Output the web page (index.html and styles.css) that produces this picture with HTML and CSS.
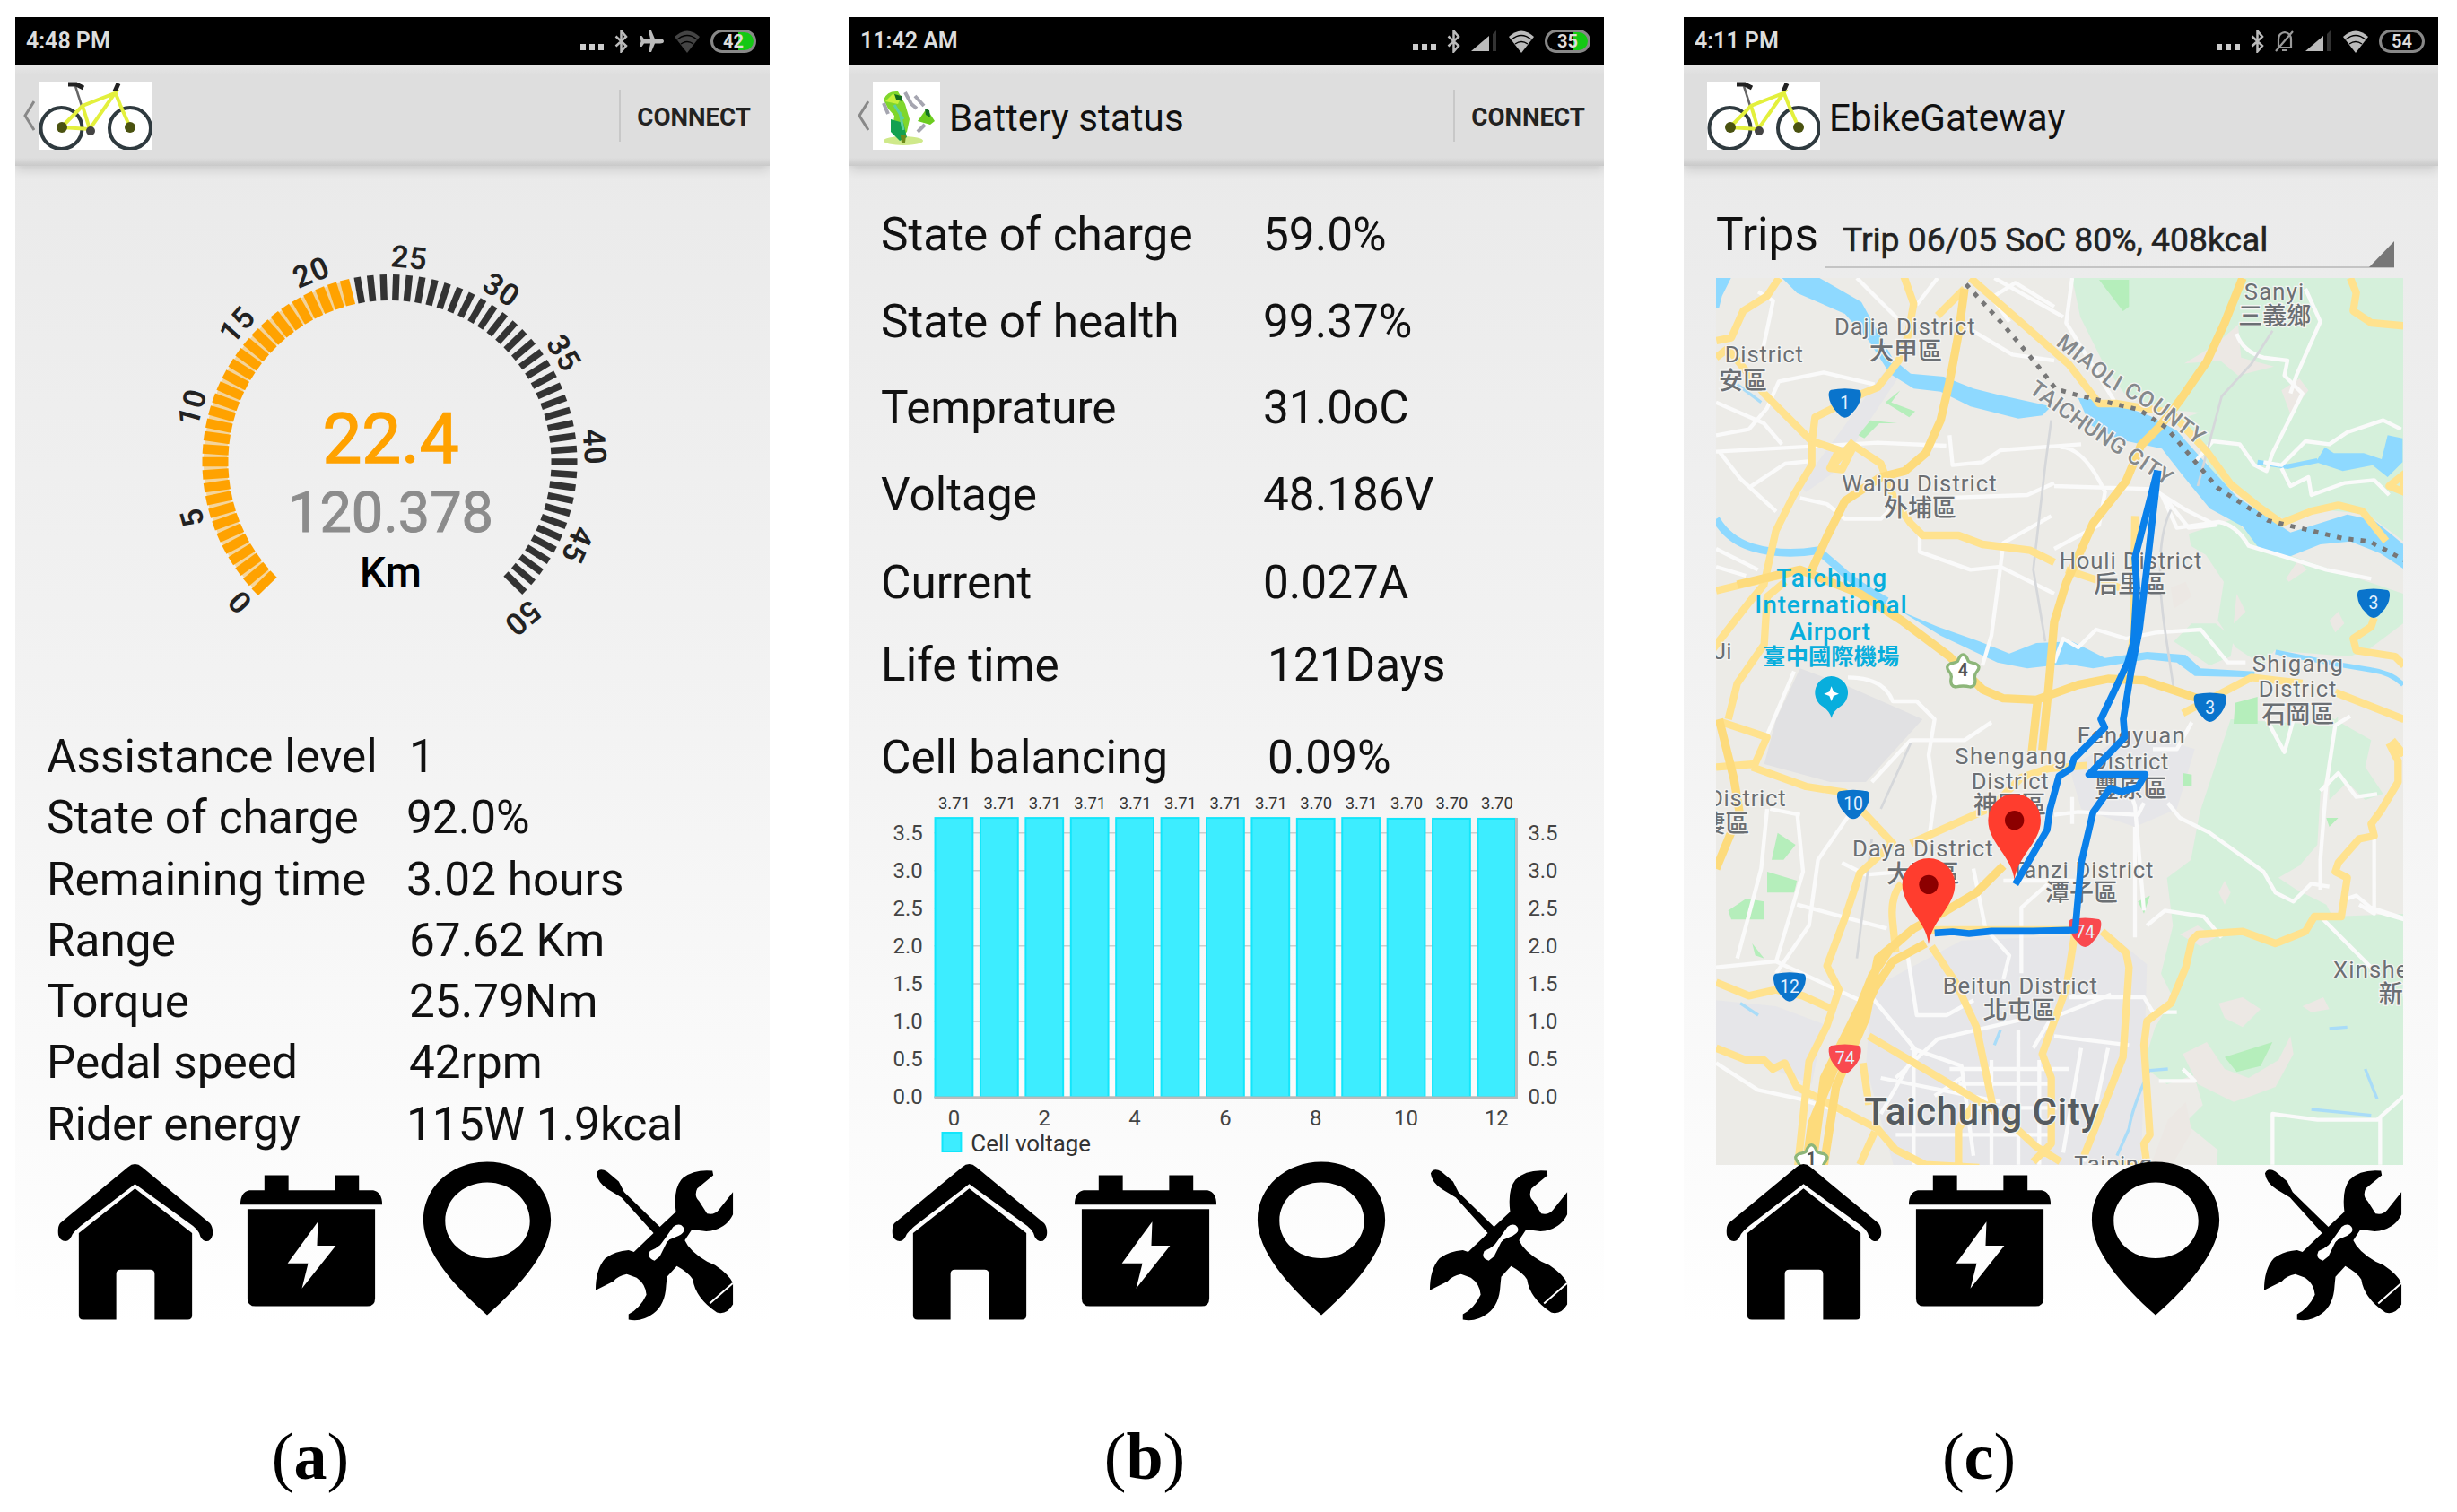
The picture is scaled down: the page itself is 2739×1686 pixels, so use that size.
FILE: index.html
```html
<!DOCTYPE html>
<html lang="en">
<head>
    <meta charset="UTF-8">
    <meta name="viewport" content="width=device-width, initial-scale=1.0">
    <title>EbikeGateway screens</title>
    <link rel="stylesheet" href="styles.css">
</head>
<body>
    <!-- Shared icons -->
    <svg class="sprite" aria-hidden="true">
        <symbol id="dots" viewBox="0 0 26 26"><path d="M0 18h6v7H0zM10 18h6v7h-6zM20 18h6v7h-6z" fill="#ccc"/></symbol>
        <symbol id="bluetooth" viewBox="0 0 15 26"><path d="M1.500 7.500 13 18l-5.500 6.500v-23L13 8 1.500 18.500" fill="none" stroke="#bbb" stroke-width="2.500"/></symbol>
        <symbol id="plane" viewBox="0 0 28 26"><path d="M28 13c0-1.800-2-2.500-4-2.500h-6L14 1h-3l2 9.500H6L3.500 7H1l1.500 6L1 19h2.500L6 15.500h7L11 25h3l4-9.500h6c2 0 4-.7 4-2.500z" fill="#bbb"/></symbol>
        <symbol id="signal" viewBox="0 0 30 26"><path d="M0 24 20 7v17z" fill="#bbb"/><path d="M24 24V5l4-4v23z" fill="#333"/></symbol>
        <symbol id="bell" viewBox="0 0 22 26"><path d="M4 20V11q0-7 7-8 7 1 7 8v9zM8 23h6M1 24 20 2" fill="none" stroke="#999" stroke-width="2.200"/></symbol>
        <symbol id="wifi" viewBox="0 0 28 26">
            <path d="M0 8Q14-5 28 8L14 26z" fill="currentColor"/>
            <path d="M3 11q11-9 22 0M7 16q7-5 14 0" fill="none" stroke="#000" stroke-width="1.500"/>
        </symbol>
        <symbol id="bike" viewBox="0 0 126 76">
            <g fill="none" stroke="#2f3a3f" stroke-width="4">
                <circle cx="25.500" cy="52" r="23"/>
                <circle cx="102" cy="52" r="23"/>
                <path d="M48 27 41 5" stroke="#666" stroke-width="2.500"/>
                <path d="M33 3h9l8 4M85 11l4-9" stroke="#222" stroke-width="5"/>
            </g>
            <path d="M25.500 51 49 27 85 13 57 53zM49 27l8 26M85 11l6 15 11 25" fill="none" stroke="#e3f03c" stroke-width="4"/>
            <circle cx="26" cy="51" r="6" fill="#4a5210"/>
            <circle cx="102" cy="51" r="6" fill="#4a5210"/>
            <circle cx="58" cy="55" r="5" fill="#444"/>
        </symbol>
        <symbol id="home" viewBox="0 0 175 178">
            <path d="M3 69 79 6q8-7 16 0l76 63q4 5 3 13-2 8-8 7-5-1-7-9-2-4-7-8L87 25 26 72q-6 5-9 9-3 8-8 8-6 0-8-7-1-9 2-13z"/>
            <path d="M24 80 87 30l64 50v92q0 5-5 5h-37v-51q0-5-5-5H71q-5 0-5 5v51H29q-5 0-5-5z"/>
        </symbol>
        <symbol id="battery" viewBox="0 0 175 178">
            <path d="M34 15h27v17h52V15h27v17h16q10 2 10 16H7q0-14 10-16h17z"/>
            <path fill-rule="evenodd" d="M15 53h143v100q0 9-9 9H24q-9 0-9-9zM94 67 60 114h23l-7 28 38-48H93z"/>
        </symbol>
        <symbol id="pin" viewBox="0 0 175 178">
            <path fill-rule="evenodd" d="M85.500 0C125 0 157 28 157 65c0 34-32 72-71.500 107C46 137 14 99 14 65 14 28 46 0 85.500 0zm0 23c-26 0-47 19-47 43s21 42 47 42 48-18 48-42-22-43-48-43z"/>
        </symbol>
        <symbol id="tools" viewBox="0 0 175 178">
            <path d="M10 13q3-7 12-2l13 11 6 12 40 39 18-17q-3-25 6-36 12-12 35-10l1 5-18 15q-4 8 2 14l9 14q8 2 13-4l16-20v25q-8 17-30 19l-16-2-8 12q5 12 25 24l9 4q15 10 20 20v24q-7 12-18 9-24-16-27-37-5-8-18-15l-11 12-1 10q-1 21-14 31-13 10-28 7v-6q13-7 20-22-1-12-11-19l-11-4q-10 2-15 8L9 144q0-24 11-36 11-8 26-9l6 2 22-21-36-40-15-9Q11 23 10 13z"/>
            <path d="M96 73q7-5 11 0t-5 10L90 88l-9 18-6 5q-9-3-5-11 7-3 11-6l8-11z" fill="#fff"/>
            <path d="M137 159l26-23M91 87 77 98" stroke="#fff" stroke-width="2"/>
        </symbol>
        <symbol id="shield" viewBox="-54 -50 108 100" overflow="visible">
            <path d="M-46-44q46-9 92 0 9 2 8 20-2 30-28 56-26 34-52 0-26-26-28-56-1-18 8-20z"/>
        </symbol>
        <symbol id="marker" viewBox="-90 -90 180 300" overflow="visible">
            <path d="M0 200C-8 120-88 75-88 0a88 88 0 0 1 176 0C88 75 8 120 0 200z" fill="#ff3d2e"/>
            <circle r="32" fill="#8c0000"/>
        </symbol>
    </svg>

    <main class="figure">
        <!-- (a) Dashboard -->
        <section class="panel">
            <div class="screen">
                <div class="status-bar">
                    <span class="time">4:48 PM</span>
                    <svg class="st-dots"><use href="#dots"/></svg>
                    <svg class="st-bt"><use href="#bluetooth"/></svg>
                    <svg class="st-plane"><use href="#plane"/></svg>
                    <svg class="st-wifi dim"><use href="#wifi"/></svg>
                    <span class="level charging">42</span>
                </div>
                <header class="app-bar">
                    <svg class="back" viewBox="0 0 13 34"><path d="M12 1 2 17l10 16"/></svg>
                    <svg class="logo-bike"><use href="#bike"/></svg>
                    <button class="connect">CONNECT</button>
                </header>
                <svg class="gauge" viewBox="-417.5 -330 841 624">
                    <g id="ticks"></g>
                    <g id="tick-labels"></g>
                    <text class="speed" x="1" y="1">22.4</text>
                    <text class="distance" x="1" y="78">120.378</text>
                    <text class="unit" x="1" y="139">Km</text>
                </svg>
                <dl class="readings ride">
                    <dt>Assistance level</dt><dd class="nudge">1</dd>
                    <dt>State of charge</dt><dd>92.0%</dd>
                    <dt>Remaining time</dt><dd>3.02 hours</dd>
                    <dt>Range</dt><dd class="nudge">67.62 Km</dd>
                    <dt>Torque</dt><dd class="nudge">25.79Nm</dd>
                    <dt>Pedal speed</dt><dd class="nudge">42rpm</dd>
                    <dt>Rider energy</dt><dd>115W 1.9kcal</dd>
                </dl>
                <nav class="tabs">
                    <svg><use href="#home"/></svg>
                    <svg><use href="#battery"/></svg>
                    <svg><use href="#pin"/></svg>
                    <svg><use href="#tools"/></svg>
                </nav>
            </div>
            <p class="caption">(<b>a</b>)</p>
        </section>

        <!-- (b) Battery status -->
        <section class="panel">
            <div class="screen">
                <div class="status-bar">
                    <span class="time">11:42 AM</span>
                    <svg class="st-dots"><use href="#dots"/></svg>
                    <svg class="st-bt"><use href="#bluetooth"/></svg>
                    <svg class="st-signal"><use href="#signal"/></svg>
                    <svg class="st-wifi"><use href="#wifi"/></svg>
                    <span class="level charging">35</span>
                </div>
                <header class="app-bar">
                    <svg class="back" viewBox="0 0 13 34"><path d="M12 1 2 17l10 16"/></svg>
                    <svg class="logo-battery" viewBox="0 0 75 76">
                        <ellipse cx="34" cy="66" rx="22" ry="5" fill="#cfe98a"/>
                        <path d="M12 20q4-10 16-9l8 14 5 17-3 14-8 8-8-12 2-14-7-8z" fill="#7fd62c"/>
                        <path d="M20 42l14 4 4 16-8 4-10-10z" fill="#12a050"/>
                        <path d="M14 22l8-8 10 2-4 9z" fill="#c6f03c"/>
                        <path d="M24 14l8 2 1 6-7-2z" fill="#136b1e"/>
                        <path d="M24 26l10 16M30 34l4 20" stroke="#5cd0a0" stroke-width="3"/>
                        <path d="M12 24l5 12M36 12l7 13 6 5M47 16l10 11M50 56l8-8" fill="none" stroke="#a5a5b0" stroke-width="4"/>
                        <path d="M50 44l10-14 9 14-5 4z" fill="#6ccc1f"/>
                        <path d="M58 30l5 2 1 8-5-3z" fill="#137026"/>
                        <path d="M31 60h6l-1 8h-4z" fill="#6e8b1a"/>
                    </svg>
                    <h1>Battery status</h1>
                    <button class="connect">CONNECT</button>
                </header>
                <dl class="readings pack">
                    <dt>State of charge</dt><dd>59.0%</dd>
                    <dt>State of health</dt><dd>99.37%</dd>
                    <dt>Temprature</dt><dd>31.0oC</dd>
                    <dt>Voltage</dt><dd>48.186V</dd>
                    <dt>Current</dt><dd>0.027A</dd>
                    <dt>Life time</dt><dd class="nudge">121Days</dd>
                    <dt>Cell balancing</dt><dd class="nudge">0.09%</dd>
                </dl>
                <svg class="chart" id="chart" viewBox="0 0 845 405" preserveAspectRatio="none"></svg>
                <nav class="tabs">
                    <svg><use href="#home"/></svg>
                    <svg><use href="#battery"/></svg>
                    <svg><use href="#pin"/></svg>
                    <svg><use href="#tools"/></svg>
                </nav>
            </div>
            <p class="caption">(<b>b</b>)</p>
        </section>

        <!-- (c) Trips -->
        <section class="panel">
            <div class="screen">
                <div class="status-bar">
                    <span class="time">4:11 PM</span>
                    <svg class="st-dots"><use href="#dots"/></svg>
                    <svg class="st-bt"><use href="#bluetooth"/></svg>
                    <svg class="st-bell"><use href="#bell"/></svg>
                    <svg class="st-signal"><use href="#signal"/></svg>
                    <svg class="st-wifi"><use href="#wifi"/></svg>
                    <span class="level">54</span>
                </div>
                <header class="app-bar no-back">
                    <svg class="logo-bike"><use href="#bike"/></svg>
                    <h1>EbikeGateway</h1>
                </header>
                <div class="trip-picker">
                    <span class="trip-label">Trips</span>
                    <div class="spinner">Trip 06/05 SoC 80%, 408kcal</div>
                </div>
                <svg class="map" viewBox="39 24 2298 2967" preserveAspectRatio="none">
                    <rect x="39" y="24" width="2298" height="2967" fill="#ecebe7"/>
                    <!-- built-up land -->
                    <g fill="#e6e6e9">
                        <path d="M39 2440l200 20 160 60-40 200-320-120zM560 2400l300-160 500-20 120 100-20 700H640L540 2660z"/>
                        <path d="M1220 1660l220-120 200 60-60 200-140 60-180-60zM600 340l60 0-220 330-100 70-20-20z"/>
                        <path d="M320 1330 480 1390 730 1500 540 1710 420 1710 200 1650 240 1500z" fill="#e1e1e3"/>
                    </g>
                    <!-- hills -->
                    <g fill="#d5f0db">
                        <path d="M1230 24h1107v880l-120-90-200-20-50 50-130-60-130-90-60-120-50-80 60-20-110-10-140-50-70-100-80-160z"/>
                        <path d="M1620 880l150-50 90 90 120 40 180 60 177 60v100l-120 90-60 20-250-20-40 50-90-60-60-90 20-130-60-90-50-30z"/>
                        <path d="M1570 1240l60-60 80 0 60 50-10 60-70 30z"/>
                        <path d="M1760 1500l330 20 30-30-20 140-40 120-10 170-60 70-70 40 60 40 100 50 20 40 260-10 77 90v1251h-820l60-40 100-230-80-10 20-270-110-90 60-60-30-100-90 30-80-60 40-130 60-100-40-80 40-160-20-160 80-60 30-160z"/>
                        <path d="M2090 1490l140 80-20 90 60 90-60 20-60-60-60 60z"/>
                    </g>
                    <g fill="#ece8e4">
                        <path d="M1705 250l80-70 10 110 110 30-120 30-60-50-120 10zM1930 400l60-40 30 40-60 80zM1560 1060l50-20 20 50-60 40zM1780 1080l30 60-40 40zM1945 1030l40-60 30 30-60 40zM2090 1170l30-30 20 40-30 30z"/>
                        <path d="M1720 2450l80-20 60 40-60 60-60-30zM1600 2620l80-40 60 90 80 30 100-60 40-80 10 60-60 110-80 30-60 20-120-60zM1740 2040l20 40-20 40-20-40zM2000 2460l70-30 20 40-60 10zM1590 2220l60-30 60 40-50 30zM1550 2840l60-60 20 100-60 100-80 20z"/>
                    </g>
                    <g fill="#b5eebb">
                        <path d="M1320 30h100v90l-20 15zM1740 2630l160-50-40 80-80 20zM1600 1680l30 5v40h-30zM245 1880l60 40-40 50-40 0zM210 2010l100 30-10 40-90 0zM80 2140l60-40 60 10v60l-110 0zM160 2250l40 50-30-10zM515 550l40-50 90 10-60 0-50 50zM605 440l50-40-30 40 80 30-20 20zM2080 1830l40 0-30 30zM1450 2110l40-20-20 60z"/>
                        <path d="M1775 1445l75-20v90h-80z"/>
                    </g>
                    <!-- water -->
                    <g fill="#8ed9ff">
                        <path d="M260 24h125l140 80 55 100 50 90 60 50 110 10 100 40 80 20 180 40-30 30-80 10-160-40-100-50-90-10-80-50-70-110-80-90-160-70z"/>
                        <path d="M39 24h50l-30 60-10 40H39zM1250 425l100 10 140 50 90 50 80 90 120 130 180 120 190-60 90 20 110 90v80l-90-60-100-40-100 10-100 40-100-20-60-80-110-60-90-110-70-90-140-30-100-50z"/>
                        <path d="M2045 640l30-50 30 20 100 0 60 20 20-80 50 10v80l-50 50-50-40-100 20z"/>
                        <path d="M660 1140l120 50 140 50 100 40 90-35 120-5 110 55 140-20 130 10 50 45 180 10v20l-200-5-60-45-100-10-180 30-90-15-130 15-100-20-190-90z"/>
                    </g>
                    <path d="M39 830Q80 900 160 925q100 30 220 10l70 60q50 50 160 110" fill="none" stroke="#8ed9ff" stroke-width="26"/>
                    <path d="M1910 1275l200 40 120 20q70 10 107 50M1850 640l100 15 100-20" fill="none" stroke="#8ed9ff" stroke-width="16"/>
                    <path d="M1490 2675l60-5M1490 2670q-60 130-70 200l-40 90M2210 2670l40 100M2030 2805l200 20M2090 2535l60-5M120 2450l60 40M970 2590l20-50M110 380l80 60" fill="none" stroke="#a9dcf8" stroke-width="10"/>
                    <!-- minor roads -->
                    <g class="road-minor">
                        <path d="M180 70l50 30-40 190M39 440l160 70 60 70M39 550l110-20 60-70 40-90 150-30 170 40M39 605l540-30 230 10M50 605l70 90 120 110M150 725l120-80 100-10 M320 760l90 20 60 50 120 0 60-60"/>
                        <path d="M510 24l150 150M780 24l-70 90M880 190l150 90 140 20M940 60l80 110M1170 120 1040 40 960 90M970 24l230 130"/>
                        <path d="M820 550l10 100 100-10 60-40 270-20M780 760l300-10 90-40M1190 590q80 0 150 150l-20 110-150 80M1170 720l330 10 110 70 100 50-90 10-80-100"/>
                        <path d="M720 870v70l170 60 100-10 180 90M990 990l10-80 160-90M990 990l-30 230-30 100M1170 1310l30-80 50 30 60-60 100 30 100-20 150-10 90 110 60 0"/>
                        <path d="M1230 24l-20 150 160 260M1780 210q20 60 90 80l80 10-10 50 60 60-30 60-70 140-20 60-40-20-50-70-90-10-60 70M2010 60l50 110-80 180-20 60M1870 640l60 10 80-80 80 10 60-40 120-40 60 30M1930 660l30 60 60-30 10 60 110-40 100-10 50 50"/>
                        <path d="M1530 750l50 110 140-20q60 10 100 80l100 30 160 50 150 30"/>
                        <path d="M39 930l140 70M39 990l100 30M300 1340l-110 260M480 1360q120 0 150 80l80 0 60 60-20 120 20 140-20 150M560 1710l130-140 180 0 90-60"/>
                        <path d="M210 1800l-20 200-80 300M310 1810l20 200-90 300M540 1740l-160 230-30 220-110 160M220 1800l100 20M310 2120l300 80M460 1980l80 40 120-10M39 2330l200-20 280 130"/>
                        <path d="M680 2290l30 200 100 0 90-50M560 2430l150 180-120 210M39 2650l140 90 140 30 160 50 M690 2600l170 60 40 300M590 2700l400 80M860 2700l-90 60 M1050 2540v450M900 2000l40 200 80 90-20 80M1060 2350V2130l90-80M1000 2040l240 0M640 2700l140-130 300-70M1100 2600l60-100 200-80"/>
                        <path d="M1220 2430l250 0 30 50 80 0M1260 2600l-60 350M1170 2560l250 30M1350 2600l-80 380M1470 2140l-30-350-20-60M1550 1780l40 50 100 50 180 130 40 70 60 30 60-60 60 10M1480 2190l60-50 130 20 60 70M2060 2070l0-100 20-250 30-200 50-30M2060 1740l60-60 60 80 70-10M2240 1900v250l-50-30M2150 2100l30-10 60 50 100 30M2230 2130l120 40M2060 2160l200 200M1900 2990v-170l150 20 200 0 90-80M2260 2830l0 160"/>
                        <path d="M1170 1820l80-10 200 10 20-40M1230 1760v90M1440 1860v370M1880 1500l60 110 30-110M1500 1600h80l50-90M1600 2670l40 40-120 0M820 2670h400M850 2720h320M900 2800h280M960 2640v350M1120 2640v350M640 2890h520M700 2600v390"/>
                    </g>
                    <path d="M1160 500l-20 150-40 350 40 240M1900 200l-70 110-100 110-80 300M1560 800q-60 120-20 400l30 200M590 1800l100-220M560 1900l-50 400" fill="none" stroke="#d5d7da" stroke-width="8"/>
                    <!-- main roads -->
                    <g class="road-main">
                        <path d="M250 24l-40 60-80 50-40 90-50 10M39 290l40-30 120 150 160 160 0 80-60 100-60 120-40 180-50 60-140 180M360 570l10-80 160-80 50-20 70-90 30-80 20-110-50-140"/>
                        <path d="M360 570l90 30-30 60 40 5 40-80 90 60 50 130 50 70 40 40 120 0 80 30 160 20 80 40M430 650l70-80"/>
                        <path d="M39 1070l250-60M80 1500l30-120 90-130 10-160 60-50M890 24l330 290 100 130 60 0 180 30 120 130 80 110 100 80 70 50 100-40 90-20 80 20 80 100M780 150l90-90M2160 24l20 50-10 60 60 40 110 10M1440 820l-5 400-20 130M1210 1000l180 60M2240 1160l-10 30-60 40 10 40 130 20 30 30M1600 1480l230-120 170 20M2110 1410l230 90"/>
                        <path d="M39 1660l130-10 40-90-150-50M160 1660l180 65 130 20 160 170-110 100-50 150-60 160 40 80-40 120-60 120-60 560M690 1915l270-120 100-100 90-30 130-10M39 2380l110 45 90-20 90 20 110 50M39 2600l100 40 60 0 30 30 40-20 40 80 270 140 60 70 100 50 180 10M520 2990l50-110M550 2560l440 260 120 110 80 50M760 2260l80 120 70 150 60 290M660 2050q-40 40-30 130l10 100M530 2650l20 140M850 2990v-120l50-80M1100 2980l60-60 0-220-30-80 80-220 30-190"/>
                        <path d="M2290 1580l30 60 0 70-60 100-30 40 10 40-50 10-70 80-10 30 40 20-20 130-90 0-30 50-100 40-110-40-150 10-20 20-20 90-50 120-80 60-10 80 20 300-20 30 10 70-110 0"/>
                        <path d="M1330 2210l80 70 10 50-20 300-130 330"/>
                        <path d="M740 2205h500"/>
                        <path d="M2300 1570l40 50M2290 720l50 20v-60z"/>
                    </g>
                    <g class="road-motorway">
                        <path d="M870 60l-20 150-30 160-30 130-50 110-70 60-80 20-120 80-60 120-60 130M1800 24l-60 150-60 130-90 130-70 90-60 60-50 120-110 140-90 200-40 130-20 230-20 200"/>
                        <path d="M110 1050l210-50 200 80 140 90 160 120 110 110 70 30 110 5 140-50 100-20 120 5 240 80"/>
                        <path d="M1115 1430l-20 180M39 2000l50-120 30-60-20-120-50-200"/>
                        <path d="M1000 1990l-90 90-100 60-110 60-80 70-60 90-40 100-60 120-60 120-40 300M740 2250l-110 60-60 90-70 150-50 80-90 220-20 140M700 2200l-120 100-40 200-100 230-40 260"/>
                    </g>
                    <path class="border-line" d="M875 45l120 130 110 130 70 90 70 20 210 50 90 60 170 200 170 110 250 60 90 10 120 65"/>
                    <!-- place names -->
                    <g class="place">
                        <text x="435" y="212" textLength="470">Dajia District</text>
                        <text class="zh" x="552" y="297">大甲區</text>
                        <text x="68" y="305" textLength="262">District</text>
                        <text class="zh" x="48" y="397">安區</text>
                        <text x="460" y="738" textLength="517">Waipu District</text>
                        <text class="zh" x="600" y="823">外埔區</text>
                        <text x="1805" y="95" textLength="200">Sanyi</text>
                        <text class="zh" x="1786" y="181">三義鄉</text>
                        <text x="1187" y="995" textLength="476">Houli District</text>
                        <text class="zh" x="1303" y="1078">后里區</text>
                        <text x="1832" y="1340" textLength="304">Shigang</text>
                        <text x="1853" y="1425" textLength="260">District</text>
                        <text class="zh" x="1864" y="1512">石岡區</text>
                        <text x="1247" y="1582" textLength="360">Fengyuan</text>
                        <text x="1297" y="1668" textLength="255">District</text>
                        <text class="zh" x="1305" y="1760">豐原區</text>
                        <text x="838" y="1650" textLength="373">Shengang</text>
                        <text x="893" y="1735" textLength="258">District</text>
                        <text class="zh" x="900" y="1815">神岡區</text>
                        <text x="495" y="1960" textLength="470">Daya District</text>
                        <text class="zh" x="610" y="2045">大雅區</text>
                        <text x="1025" y="2030" textLength="476">Tanzi District</text>
                        <text class="zh" x="1140" y="2110">潭子區</text>
                        <text x="12" y="1790" textLength="260">District</text>
                        <text class="zh" x="-92" y="1877">梧棲區</text>
                        <text x="797" y="2417" textLength="517">Beitun District</text>
                        <text class="zh" x="932" y="2502">北屯區</text>
                        <text x="2103" y="2363" textLength="250">Xinshe</text>
                        <text class="zh" x="2255" y="2447">新社區</text>
                        <text x="30" y="1300">Ji</text>
                        <text x="1237" y="3016" textLength="260">Taiping</text>
                    </g>
                    <path id="county" d="M1173 247 1345 385 1500 470 1650 585" fill="none"/>
                    <path id="city" d="M1082 405 1240 520 1400 625 1560 730" fill="none"/>
                    <text class="region"><textPath href="#county" textLength="585">MIAOLI COUNTY</textPath></text>
                    <text class="region"><textPath href="#city" textLength="560">TAICHUNG CITY</textPath></text>
                    <g class="airport">
                        <text x="425" y="1055" textLength="368">Taichung</text>
                        <text x="423" y="1145" textLength="508">International</text>
                        <text x="420" y="1235" textLength="270">Airport</text>
                        <text class="zh" x="424" y="1318">臺中國際機場</text>
                        <path d="M425 1496q-6-24-32-40a55 55 0 1 1 64 0q-26 16-32 40z"/>
                        <path d="M425 1390l7 18 18 7-18 7-7 18-7-18-18-7 18-7z" fill="#fff"/>
                    </g>
                    <text class="big-city" x="535" y="2855" textLength="785">Taichung City</text>
                    <!-- highway numbers -->
                    <g class="shields">
                        <use href="#shield" x="416" y="392" width="108" height="100" fill="#0a74cc"/><text x="470" y="462">1</text>
                        <use href="#shield" x="440" y="1735" width="116" height="100" fill="#0a74cc"/><text x="498" y="1802">10</text>
                        <use href="#shield" x="227" y="2345" width="116" height="100" fill="#0a74cc"/><text x="285" y="2414">12</text>
                        <use href="#shield" x="2184" y="1062" width="108" height="100" fill="#0a74cc"/><text x="2238" y="1132">3</text>
                        <use href="#shield" x="1637" y="1410" width="108" height="100" fill="#0a74cc"/><text x="1691" y="1482">3</text>
                        <use href="#shield" x="412" y="2586" width="116" height="100" fill="#f9494f"/><text x="470" y="2654">74</text>
                        <use href="#shield" x="1215" y="2163" width="116" height="100" fill="#f9494f"/><text x="1273" y="2232">74</text>
                        <path d="M865 1284q10 0 18 22 6 5 24 8 18 8 6 24-12 14-8 26 4 26-16 28-24-6-48 0-20-2-16-28 4-12-8-26-12-16 6-24 18-3 24-8 8-22 18-22z"/><text class="dark" x="865" y="1357">4</text>
                        <path d="M358 2924q10 0 18 22 6 5 24 8 18 8 6 24-12 14-8 26 4 26-16 28-24-6-48 0-20-2-16-28 4-12-8-26-12-16 6-24 18-3 24-8 8-22 18-22z"/><text class="dark" x="358" y="2990">1</text>
                    </g>
                    <!-- recorded route -->
                    <g class="route">
                        <path d="M1515 668l-75 292 6 100-10 180-20 70-90 190 13 28-103 104-10 33-40 25-30 110-10 70-106 182"/>
                        <path d="M1517 668l-32 282-30 250-28 140-26 160 5 60-120 125h188l-24 42-55 16-38-12-57 80-40 170-20 224-140 4H960l-75 8-55-6-60 4"/>
                    </g>
                    <use href="#marker" x="947" y="1748" width="180" height="300"/>
                    <use href="#marker" x="660" y="1963" width="180" height="300"/>
                </svg>
                <nav class="tabs">
                    <svg><use href="#home"/></svg>
                    <svg><use href="#battery"/></svg>
                    <svg><use href="#pin"/></svg>
                    <svg><use href="#tools"/></svg>
                </nav>
            </div>
            <p class="caption">(<b>c</b>)</p>
        </section>
    </main>

    <script>
        const svgNS = 'http://www.w3.org/2000/svg';

        function add(parent, tag, attrs, text) {
            const el = document.createElementNS(svgNS, tag);
            for (const key in attrs) {
                el.setAttribute(key, attrs[key]);
            }
            if (text !== undefined) {
                el.textContent = text;
            }
            parent.appendChild(el);
        }

        function arc(r, from, to) {
            const a = from * Math.PI / 180;
            const b = to * Math.PI / 180;
            return `M${r * Math.cos(a)} ${r * Math.sin(a)}A${r} ${r} 0 0 1 ${r * Math.cos(b)} ${r * Math.sin(b)}`;
        }

        // Speed gauge: one tick every 4 degrees, lit up to the current speed
        const ticks = document.getElementById('ticks');
        const tickLabels = document.getElementById('tick-labels');
        const labelAngles = [137, 164.3, 195.5, 222, 247.5, 275.5, 303, 328, 355.8, 383.9, 409.6];

        for (let i = 0; i <= 67; i++) {
            add(ticks, 'line', {
                x1: 180, x2: 209,
                class: i <= 30 ? 'tick lit' : 'tick',
                transform: 'rotate(' + (136 + i * 4) + ')'
            });
        }
        add(ticks, 'path', { class: 'lit-track', d: arc(194.5, 136, 256) });

        labelAngles.forEach((angle, i) => {
            add(tickLabels, 'text', { y: -217, transform: 'rotate(' + (angle - 270) + ')' }, i * 5);
        });

        // Cell voltage chart
        const chart = document.getElementById('chart');
        const cells = [3.71, 3.71, 3.71, 3.71, 3.71, 3.71, 3.71, 3.71, 3.70, 3.71, 3.70, 3.70, 3.70];

        for (let i = 0; i < 8; i++) {
            const y = 338 - i * 42.04;
            add(chart, 'line', { class: 'grid-line', x1: 95, x2: 747, y1: y, y2: y });
            add(chart, 'text', { class: 'axis end', x: 82, y: y + 8 }, (i * 0.5).toFixed(1));
            add(chart, 'text', { class: 'axis', x: 760, y: y + 8 }, (i * 0.5).toFixed(1));
        }
        cells.forEach((volts, i) => {
            const x = 96 + i * 50.65;
            const h = volts * 83.8;
            add(chart, 'rect', { class: 'bar', x: x, y: 338 - h, width: 42, height: h });
            add(chart, 'text', { class: 'bar-value', x: x + 21.5, y: 17 }, volts.toFixed(2));
            if (i % 2 === 0) {
                add(chart, 'text', { class: 'axis mid', x: x + 21, y: 370.5 }, i);
            }
        });
        add(chart, 'path', { class: 'frame', d: 'M95 339H747V27' });
        add(chart, 'rect', { class: 'bar', x: 104, y: 378, width: 21, height: 21 });
        add(chart, 'text', { class: 'legend', x: 136, y: 399 }, 'Cell voltage');
    </script>
</body>
</html>
```
FILE: styles.css
```css
body {
    margin: 0;
    background-color: #fff;
    font-family: Roboto, sans-serif;
    color: #111;
}

.sprite {
    display: none;
}

.figure {
    display: grid;
    grid-template-columns: repeat(3, 841px);
    column-gap: 89px;
    padding: 19px 17px 0;
}

.screen {
    display: flex;
    flex-direction: column;
    height: 1456px;
    overflow: hidden;
    background: linear-gradient(#e6e6e6, #ebebeb 15%, #f3f3f3 55%, #fcfcfc 90%, #fff);
}

/* Status bar */
.status-bar {
    display: flex;
    align-items: center;
    gap: 12px;
    height: 53px;
    padding: 0 15px 0 12px;
    background-color: #000;
    box-sizing: border-box;
}

.time {
    margin-right: auto;
    font-size: 25px;
    font-weight: 600;
    color: #ddd;
}

.status-bar svg {
    height: 26px;
}

.status-bar .st-dots {
    width: 26px;
    margin-top: -4px;
}

.st-bt {
    width: 15px;
}

.st-plane,
.st-wifi {
    width: 28px;
    color: #bbb;
}

.st-wifi.dim {
    color: #444;
}

.st-signal {
    width: 30px;
}

.st-bell {
    width: 22px;
}

.level {
    width: 51px;
    height: 26px;
    border: 3px solid #888;
    border-radius: 13px;
    box-sizing: border-box;
    font-size: 20px;
    font-weight: 700;
    line-height: 21px;
    text-align: center;
    color: #ddd;
}

.level.charging {
    background: linear-gradient(90deg, transparent 62%, #14c814 62%);
}

/* App bar */
.app-bar {
    display: flex;
    align-items: center;
    height: 113px;
    padding: 0 21px 0 9px;
    background: linear-gradient(#e7e7e7, #dedede 10%, #dedede 92%, #c9c9c9);
    box-shadow: 0 3px 12px rgba(0, 0, 0, 0.16);
    box-sizing: border-box;
}

.app-bar.no-back {
    padding-left: 26px;
}

.back {
    width: 13px;
    height: 34px;
    margin-right: 4px;
    fill: none;
    stroke: #888;
    stroke-width: 3;
}

.logo-bike,
.logo-battery {
    width: 126px;
    height: 76px;
    background-color: #fff;
    overflow: visible;
}

.logo-battery {
    width: 75px;
}

h1 {
    margin: 0 0 0 10px;
    padding-top: 5px;
    font-size: 42.200px;
    font-weight: 400;
}

.connect {
    margin-left: auto;
    height: 58px;
    padding: 3px 0 0 18px;
    border: none;
    border-left: 2px solid #c8c8c8;
    background: none;
    font-family: inherit;
    font-size: 27.700px;
    font-weight: 700;
    color: #222;
}

/* Speed gauge */
.gauge {
    display: block;
    width: 841px;
    height: 624px;
    flex: none;
    text-anchor: middle;
}

.tick {
    stroke: #333;
    stroke-width: 7.500;
}

.tick.lit {
    stroke: #ffa200;
    stroke-width: 10.500;
}

.lit-track {
    fill: none;
    stroke: #ffa200;
    stroke-opacity: 0.350;
    stroke-width: 26;
}

#tick-labels {
    font-size: 34px;
    font-weight: 600;
    letter-spacing: 1px;
    fill: #222;
}

.speed {
    font-size: 78px;
    fill: #ffa200;
    stroke: #ffa200;
    stroke-width: 1.500;
}

.distance {
    font-size: 63px;
    fill: #8c8c8c;
    stroke: #8c8c8c;
    stroke-width: 1;
}

.unit {
    font-size: 46px;
    font-weight: 500;
}

/* Label / value lists */
.readings {
    display: grid;
    margin: 0;
    padding-left: 35px;
    font-size: 51.300px;
}

.readings dd {
    margin: 0;
}

.ride {
    grid-template-columns: 401px 1fr;
    grid-auto-rows: 68.250px;
    line-height: 69px;
}

.ride .nudge {
    padding-left: 3px;
}

.pack {
    grid-template-columns: 426px 1fr;
    grid-template-rows: 97px 96px 97px 98px 92px 103px 70px;
    padding-top: 47px;
    line-height: 60px;
}

.pack .nudge {
    padding-left: 5px;
}

/* Cell chart */
.chart {
    width: 841px;
    height: 405px;
    flex: none;
}

.bar {
    fill: #3dedff;
    stroke: #12e6fb;
    stroke-width: 2;
}

.grid-line {
    stroke: #ccc;
    stroke-width: 1.500;
}

.frame {
    fill: none;
    stroke: #bbb;
    stroke-width: 3;
}

.axis {
    font-size: 24px;
    fill: #444;
}

.axis.end {
    text-anchor: end;
}

.axis.mid {
    text-anchor: middle;
}

.bar-value {
    font-size: 18.500px;
    fill: #333;
    text-anchor: middle;
}

.legend {
    font-size: 26px;
    fill: #333;
}

/* Trip picker */
.trip-picker {
    display: flex;
    align-items: flex-start;
    height: 125px;
    padding-left: 36px;
    box-sizing: border-box;
    flex: none;
}

.trip-label {
    width: 122px;
    padding-top: 47px;
    font-size: 51.300px;
    line-height: 60px;
}

.spinner {
    position: relative;
    width: 634px;
    height: 53px;
    margin-top: 61px;
    padding-left: 19px;
    border-bottom: 2px solid #c4c4c4;
    box-sizing: border-box;
    font-size: 37.300px;
    line-height: 42px;
    color: #222;
    -webkit-text-stroke: 0.600px #222;
}

.spinner::after {
    content: "";
    position: absolute;
    right: 0;
    bottom: -1px;
    border-left: 28px solid transparent;
    border-bottom: 29px solid #777;
}

/* Map */
.map {
    width: 766px;
    height: 989px;
    margin-left: 36px;
    flex: none;
}

.map + .tabs {
    margin-top: -4px;
    position: relative;
}

.road-minor,
.road-main,
.road-motorway,
.route {
    fill: none;
    stroke-linejoin: round;
}

.road-minor {
    stroke: #fafafa;
    stroke-width: 13;
}

.road-main {
    stroke: #ffe28e;
    stroke-width: 25;
}

.road-motorway {
    stroke: #fddb7c;
    stroke-width: 28;
}

.border-line {
    fill: none;
    stroke: #777;
    stroke-width: 15;
    stroke-dasharray: 16 24;
}

.place {
    font-size: 77px;
    fill: #6b6f73;
    stroke: #f4f4f2;
    stroke-width: 8;
    paint-order: stroke;
}

.zh {
    font-family: "Noto Sans CJK TC", sans-serif;
    font-size: 81px;
    font-weight: 500;
}

.region {
    font-size: 74px;
    font-weight: 500;
    fill: #85898c;
    stroke: #f4f4f2;
    stroke-width: 8;
    paint-order: stroke;
}

.airport {
    font-size: 84px;
    font-weight: 500;
    fill: #08aedd;
    text-anchor: middle;
}

.airport .zh {
    font-size: 76px;
    font-weight: 700;
}

.big-city {
    font-size: 127px;
    font-weight: 500;
    fill: #555b60;
    stroke: #f4f4f2;
    stroke-width: 8;
    paint-order: stroke;
}

.shields {
    font-size: 58px;
    text-anchor: middle;
}

.shields path {
    fill: #fff;
    stroke: #8db67a;
    stroke-width: 10;
    stroke-linejoin: round;
}

.shields text {
    fill: #e3f1ff;
}

.shields .dark {
    fill: #555;
    font-weight: 700;
}

.route {
    stroke: #0a80ea;
    stroke-width: 23;
}

/* Bottom navigation */
.tabs {
    display: flex;
    gap: 23px;
    height: 180px;
    margin-top: auto;
    padding-left: 47px;
    flex: none;
}

.tabs svg {
    width: 174px;
    height: 178px;
    fill: #000;
}

.caption {
    margin: 107px 183px 0 0;
    font-family: "Liberation Serif", serif;
    font-size: 74px;
    text-align: center;
    color: #000;
}
```
